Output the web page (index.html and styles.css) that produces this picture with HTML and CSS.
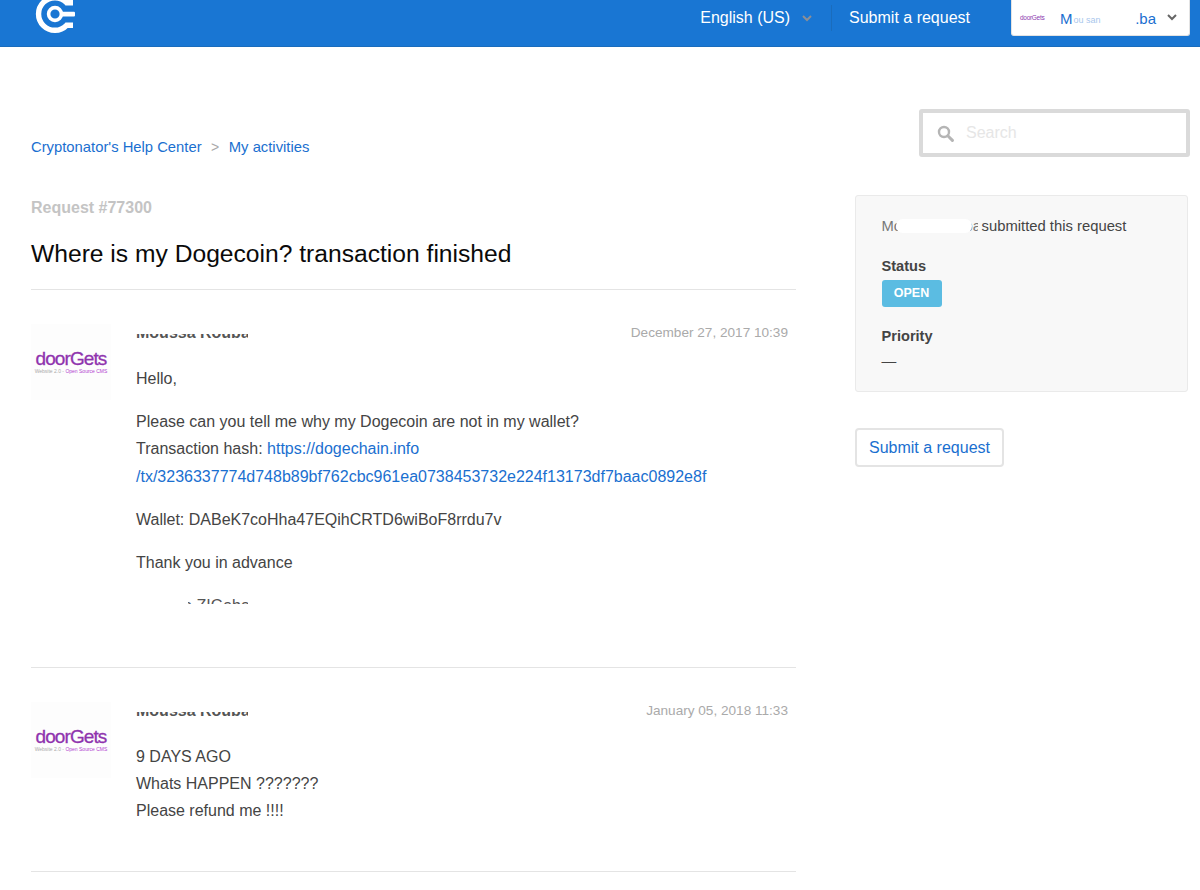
FILE: index.html
```html
<!DOCTYPE html>
<html lang="en">
<head>
<meta charset="utf-8">
<title>Where is my Dogecoin? transaction finished</title>
<link rel="stylesheet" href="styles.css">
</head>
<body>
<header class="topbar">
  <a class="logo" href="#" aria-label="Cryptonator">
    <svg width="44" height="40" viewBox="0 0 44 40">
      <path d="M38 2.7H31.6A16.3 16.3 0 1 0 31.6 25.3H38" fill="none" stroke="#fff" stroke-width="5.4"/>
      <circle cx="20" cy="14" r="6.4" fill="none" stroke="#fff" stroke-width="3.6"/>
      <rect x="25" y="11.8" width="15" height="4.6" rx="1" fill="#fff"/>
    </svg>
  </a>
  <nav class="topnav">
    <span class="lang">English (US)
      <svg class="chev" width="10" height="7" viewBox="0 0 10 7"><path d="M1 1l4 4 4-4" fill="none" stroke="#8c8f96" stroke-width="2"/></svg>
    </span>
    <span class="navsep"></span>
    <a class="navlink" href="#">Submit a request</a>
    <span class="userbox">
      <span class="miniavatar">doorGets</span>
      <span class="username">M<span class="frag">ou san</span><span class="tail">.ba</span></span>
      <svg width="10" height="7" viewBox="0 0 10 7"><path d="M1 1l4 4 4-4" fill="none" stroke="#666" stroke-width="2"/></svg>
    </span>
  </nav>
</header>

<div class="subnav">
  <ol class="crumbs">
    <li><a href="#">Cryptonator's Help Center</a></li>
    <li class="crumbsep">&gt;</li>
    <li><a href="#">My activities</a></li>
  </ol>
  <div class="search">
    <svg width="17" height="17" viewBox="0 0 17 17"><circle cx="7" cy="7" r="5" fill="none" stroke="#b5b5b5" stroke-width="2.4"/><path d="M10.8 10.8l4.6 4.6" stroke="#b5b5b5" stroke-width="3" stroke-linecap="round"/></svg>
    <span class="placeholder">Search</span>
  </div>
</div>

<div class="layout">
  <main class="request">
    <div class="reqnum">Request #77300</div>
    <h1>Where is my Dogecoin? transaction finished</h1>

    <article class="comment first">
      <div class="avatar"><span class="brand">doorGets</span><span class="tag">Website 2.0 - <b>Open Source CMS</b></span></div>
      <div class="cbody">
        <div class="chead">
          <span class="hiddenname">Moussa Rouba</span>
          <time>December 27, 2017 10:39</time>
        </div>
        <p>Hello,</p>
        <p>Please can you tell me why my Dogecoin are not in my wallet?<br>
        Transaction hash: <a href="#">https://dogechain.info<br>/tx/3236337774d748b89bf762cbc961ea0738453732e224f13173df7baac0892e8f</a></p>
        <p>Wallet: DABeK7coHha47EQihCRTD6wiBoF8rrdu7v</p>
        <p>Thank you in advance</p>
        <span class="hiddenname sign">Moussa ZIGaba)</span>
      </div>
    </article>

    <article class="comment second">
      <div class="avatar"><span class="brand">doorGets</span><span class="tag">Website 2.0 - <b>Open Source CMS</b></span></div>
      <div class="cbody">
        <div class="chead">
          <span class="hiddenname">Moussa Rouba</span>
          <time>January 05, 2018 11:33</time>
        </div>
        <p>9 DAYS AGO<br>Whats HAPPEN ???????<br>Please refund me !!!!</p>
      </div>
    </article>
  </main>

  <aside class="side">
    <section class="details">
      <div class="submitter"><span class="blur">Moussa Rouba</span> submitted this request</div>
      <h2>Status</h2>
      <span class="badge">OPEN</span>
      <h2 class="prio">Priority</h2>
      <div class="dash">—</div>
    </section>
    <a class="btn" href="#">Submit a request</a>
  </aside>
</div>
</body>
</html>
```
FILE: styles.css
```css
* { box-sizing: border-box; }
html, body { margin: 0; padding: 0; }
body {
  font-family: "Liberation Sans", Arial, sans-serif;
  font-size: 16px;
  line-height: 27.2px;
  color: #444;
  background: #fff;
  height: 890px;
  overflow: hidden;
}
a { color: #1a6fd0; text-decoration: none; }

.topbar {
  height: 47px;
  background: #1976d3;
  border-bottom: 1px solid #1a6cbc;
  display: flex;
  justify-content: space-between;
  padding: 0 10px 0 35px;
}
.logo { display: block; height: 40px; }
.logo svg { display: block; }
.topnav { display: flex; align-items: flex-start; color: #fff; }
.lang { display: flex; align-items: center; height: 36px; font-size: 16px; }
.chev { margin-left: 12px; }
.navsep { width: 1px; height: 26px; margin: 5px 17px 0 19px; background: #1a6cbc; }
.navlink { color: #fff; height: 36px; line-height: 36px; margin-right: 41px; }
.userbox {
  width: 179px;
  height: 36px;
  background: #fff;
  border: 1px solid #e3e3e3;
  border-top: 0;
  border-radius: 0 0 3px 3px;
  display: flex;
  align-items: center;
  padding: 0 12px 0 8px;
}
.miniavatar { width: 40px; font-size: 6.5px; letter-spacing: -.3px; color: #8e3bb0; }
.username { flex: 1; display: flex; color: #1a6fd0; font-size: 15px; line-height: 38px; padding-top: 3px; }
.frag { opacity: .4; font-size: 9px; margin: 1px 0 0 1px; }
.tail { margin-left: auto; margin-right: 11px; }

.subnav {
  display: flex;
  justify-content: space-between;
  align-items: flex-start;
  height: 48px;
  margin: 62px 10px 0 31px;
}
.crumbs { display: flex; list-style: none; margin: 0; padding: 25px 0 0; font-size: 14px; }
.crumbs a { font-size: 14.8px; }
.crumbsep { margin: 0 9.5px; color: #aaa; }
.search {
  width: 271px;
  height: 48px;
  border: 4px solid #dadada;
  border-radius: 3px;
  display: flex;
  align-items: center;
  padding-left: 14px;
  gap: 12px;
}
.placeholder { color: #e6e6e6; }

.layout {
  display: flex;
  justify-content: space-between;
  padding: 0 12px 0 31px;
  margin-top: 38px;
}
.request { width: 765px; }
.reqnum { font-weight: bold; color: #c4c4c4; line-height: 20px; margin-top: 3px; }
h1 {
  margin: 0;
  padding: 21px 0 20px;
  font-size: 24.64px;
  line-height: 30px;
  font-weight: normal;
  color: #0a0a0a;
  border-bottom: 1px solid #e4e4e4;
}
.comment {
  display: flex;
  border-bottom: 1px solid #e4e4e4;
  padding-right: 8px;
}
.comment.first { height: 378px; padding-top: 34px; }
.comment.second { height: 204px; padding-top: 34px; }
.avatar {
  width: 80px;
  height: 76px;
  margin-right: 25px;
  background: #fdfdfd;
  display: flex;
  flex-direction: column;
  align-items: center;
  justify-content: center;
}
.brand {
  color: #8f33ae;
  font-size: 19px;
  line-height: 18px;
  letter-spacing: -.9px;
  -webkit-text-stroke: .3px #8f33ae;
}
.tag { font-size: 5px; line-height: 6px; color: #aaa; white-space: nowrap; }
.tag b { font-weight: normal; color: #b23fd0; }
.cbody { flex: 1; }
.chead {
  display: flex;
  justify-content: space-between;
  line-height: 18px;
  margin-bottom: 23px;
}
time { font-size: 13.6px; color: #aaa; }
.hiddenname {
  position: relative;
  display: block;
  width: 112px;
  height: 14px;
  overflow: hidden;
  font-size: 16px;
  white-space: nowrap;
  font-weight: bold;
  color: #555;
}
.hiddenname::before {
  content: "";
  position: absolute;
  left: -2px;
  right: 0;
  top: 0;
  height: 10px;
  background: #fff;
}
.hiddenname.sign { height: 15px; margin-top: -3px; font-weight: normal; line-height: 33px; }
.hiddenname.sign::before { width: 54px; right: auto; height: 18px; }
p { margin: 0 0 16px; }
p a { overflow-wrap: anywhere; }

.side { width: 333px; }
.details {
  height: 197px;
  background: #f8f8f8;
  border: 1px solid #eaeaea;
  border-radius: 3px;
  padding: 17px 25.5px;
  font-size: 14.8px;
}
.submitter { line-height: 27px; }
.blur {
  position: relative;
  display: inline-block;
  width: 96px;
  height: 14px;
  overflow: hidden;
  vertical-align: -2px;
  line-height: 14px;
  color: #777;
  white-space: nowrap;
}
.blur::after {
  content: "";
  position: absolute;
  left: 14px;
  right: 6px;
  top: 0;
  height: 14px;
  background: #fff;
  border-radius: 7px;
}
h2 { margin: 13px 0 0; font-size: 14.6px; line-height: 27px; font-weight: bold; color: #444; }
.badge {
  display: block;
  width: 60px;
  height: 27px;
  background: #5bbce2;
  border-radius: 3px;
  color: #fff;
  font-size: 12.5px;
  font-weight: bold;
  line-height: 27px;
  text-align: center;
}
.prio { margin-top: 16px; }
.dash { line-height: 22px; }
.btn {
  display: inline-block;
  margin-top: 36px;
  width: 149px;
  height: 39px;
  border: 2px solid #e4e4e4;
  border-radius: 4px;
  line-height: 35px;
  text-align: center;
}
```
